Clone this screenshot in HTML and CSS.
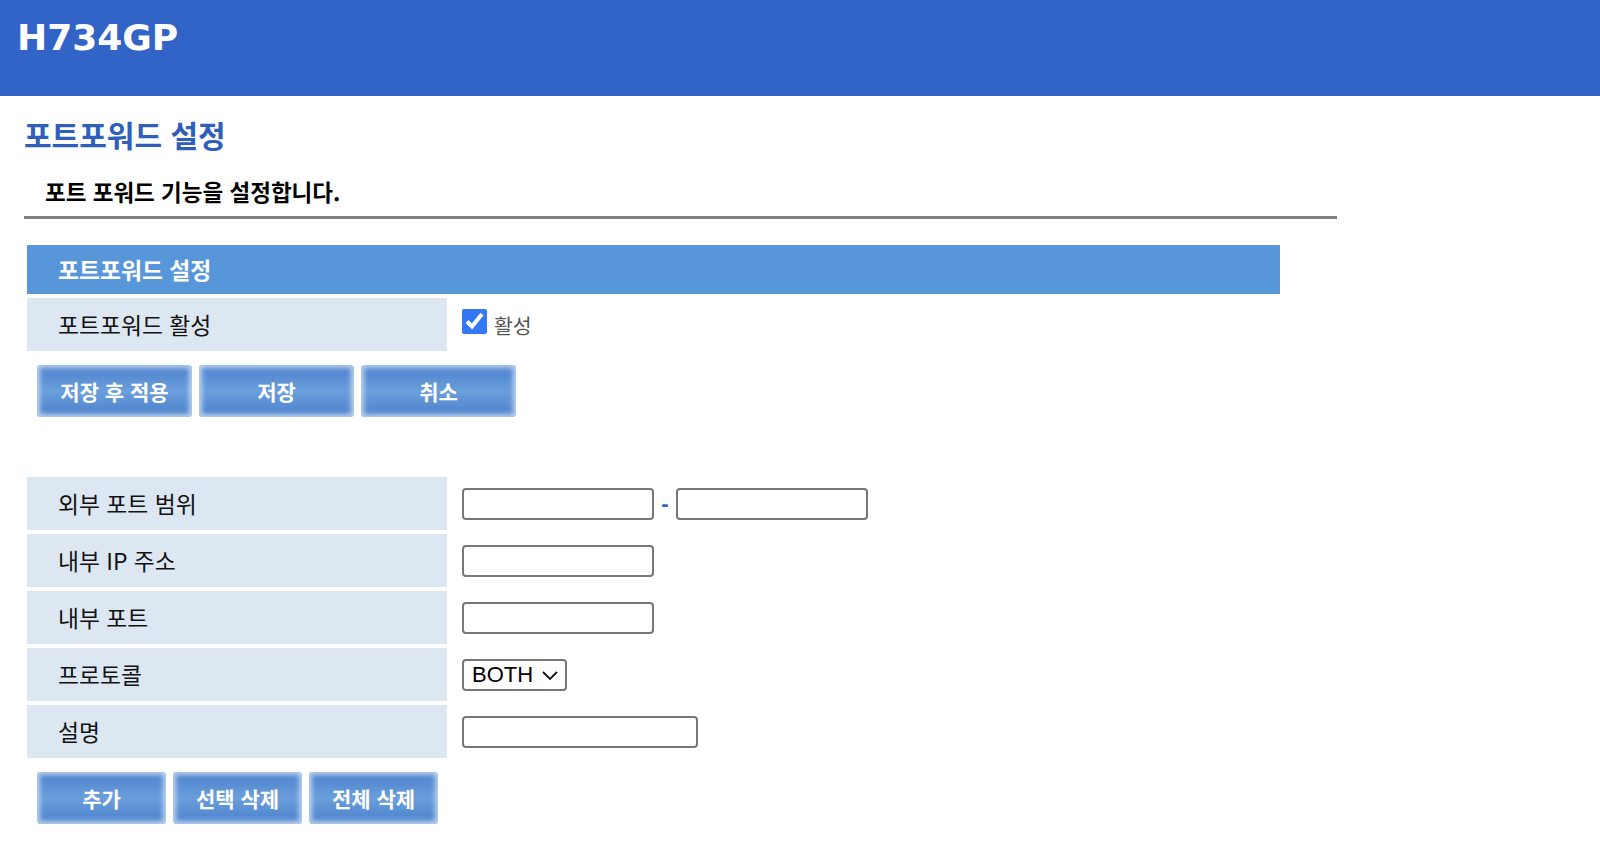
FILE: index.html
```html
<!DOCTYPE html>
<html lang="ko">
<head>
  <meta charset="UTF-8" />
  <meta name="viewport" content="width=device-width, initial-scale=1.0"/>
  <title>H734GP - 포트포워드 설정</title>
  <link rel="stylesheet" href="styles.css">
</head>
<body>
  <div class="top-bar">
    <div class="model">H734GP</div>
  </div>

  <div class="content">
    <h2 class="page-title">포트포워드 설정</h2>
    <p class="page-desc">포트 포워드 기능을 설정합니다.</p>
    <div class="divider"></div>

    <div class="panel">
      <div class="panel-head">포트포워드 설정</div>

      <div class="row">
        <div class="label">포트포워드 활성</div>
        <div class="value">
          <input type="checkbox" id="pf-enable" class="check" checked>
          <label for="pf-enable" class="check-text">활성</label>
        </div>
      </div>

      <div class="actions">
        <button class="btn btn-wide">저장 후 적용</button>
        <button class="btn btn-wide">저장</button>
        <button class="btn btn-wide">취소</button>
      </div>

      <div class="rule-form">
        <div class="row">
          <div class="label">외부 포트 범위</div>
          <div class="value">
            <input type="text" class="field">
            <span class="dash">-</span>
            <input type="text" class="field">
          </div>
        </div>
        <div class="row">
          <div class="label">내부 IP 주소</div>
          <div class="value"><input type="text" class="field"></div>
        </div>
        <div class="row">
          <div class="label">내부 포트</div>
          <div class="value"><input type="text" class="field"></div>
        </div>
        <div class="row">
          <div class="label">프로토콜</div>
          <div class="value">
            <div class="select-wrap">
              <select class="select">
                <option>BOTH</option>
                <option>TCP</option>
                <option>UDP</option>
              </select>
              <svg class="chevron" width="18" height="12" viewBox="0 0 18 12">
                <polyline points="2,3 9,10 16,3" fill="none" stroke="#111" stroke-width="1.8"/>
              </svg>
            </div>
          </div>
        </div>
        <div class="row">
          <div class="label">설명</div>
          <div class="value"><input type="text" class="field field-long"></div>
        </div>
      </div>

      <div class="actions">
        <button class="btn">추가</button>
        <button class="btn">선택 삭제</button>
        <button class="btn">전체 삭제</button>
      </div>
    </div>
  </div>
</body>
</html>
```

FILE: styles.css
```css
body {
  margin: 0;
  padding: 0;
  background: #ffffff;
  font-family: "Noto Sans CJK KR", "Noto Sans", sans-serif;
  color: #111;
}

.top-bar {
  background: #3264c8;
  height: 96px;
  box-sizing: border-box;
  padding: 16px 0 0 17px;
}

.model {
  font-family: "DejaVu Sans", sans-serif;
  font-weight: bold;
  font-size: 36px;
  line-height: 44px;
  color: #ffffff;
}

.content {
  padding-left: 24px;
}

.page-title {
  margin: 20px 0 0 0;
  font-size: 30px;
  line-height: 36px;
  font-weight: bold;
  color: #2f5fbb;
}

.page-desc {
  margin: 24px 0 0 21px;
  font-size: 22.5px;
  line-height: 30px;
  font-weight: bold;
  color: #000;
}

.divider {
  width: 1313px;
  height: 3px;
  background: #808080;
  margin-top: 10px;
}

.panel {
  margin: 26px 0 0 3px;
  width: 1253px;
}

.panel-head {
  background: #5896da;
  height: 49px;
  display: flex;
  align-items: center;
  padding-left: 31px;
  color: #fff;
  font-size: 22.8px;
  font-weight: bold;
  margin-bottom: 4px;
}

.row {
  display: grid;
  grid-template-columns: 420px 1fr;
  height: 53px;
  margin-bottom: 4px;
}

.label {
  background: #dde7f2;
  display: flex;
  align-items: center;
  padding-left: 31px;
  font-size: 22.8px;
}

.value {
  display: flex;
  align-items: center;
  padding-left: 15px;
}

.check {
  width: 25px;
  height: 25px;
  margin: 0 0 6px 0;
  accent-color: #3478f6;
}

.check-text {
  margin-left: 7px;
  font-size: 20.5px;
  color: #555;
}

.actions {
  display: flex;
  gap: 7px;
  margin: 14px 0 0 10px;
}

.rule-form {
  margin-top: 60px;
}

.btn {
  width: 129px;
  height: 52px;
  border: none;
  border-radius: 4px;
  background: linear-gradient(to bottom, #4a80cc 0%, #6a9edb 50%, #4a80cc 100%);
  box-shadow: inset 0 0 5px 3px rgba(205, 222, 245, 0.85);
  color: #fff;
  font-family: "Noto Sans CJK KR", sans-serif;
  font-size: 21px;
  font-weight: bold;
  padding: 0;
  cursor: pointer;
}

.btn-wide {
  width: 155px;
}

.field {
  width: 192px;
  height: 32px;
  box-sizing: border-box;
  border: 2px solid #777;
  border-radius: 4px;
  margin: 0;
  font-size: 16px;
  padding: 2px 6px;
}

.field-long {
  width: 236px;
}

.dash {
  color: #2f5fbb;
  font-weight: bold;
  font-size: 22px;
  width: 22px;
  text-align: center;
  font-family: "Liberation Sans", sans-serif;
}

.select-wrap {
  position: relative;
  display: inline-block;
}

.select {
  appearance: none;
  width: 105px;
  height: 32px;
  box-sizing: border-box;
  border: 2px solid #777;
  border-radius: 4px;
  background: #fff;
  font-family: "Liberation Sans", Arial, sans-serif;
  font-size: 22px;
  color: #000;
  padding: 0 0 0 8px;
  margin: 0;
}

.chevron {
  position: absolute;
  right: 8px;
  top: 10px;
  pointer-events: none;
}
```
